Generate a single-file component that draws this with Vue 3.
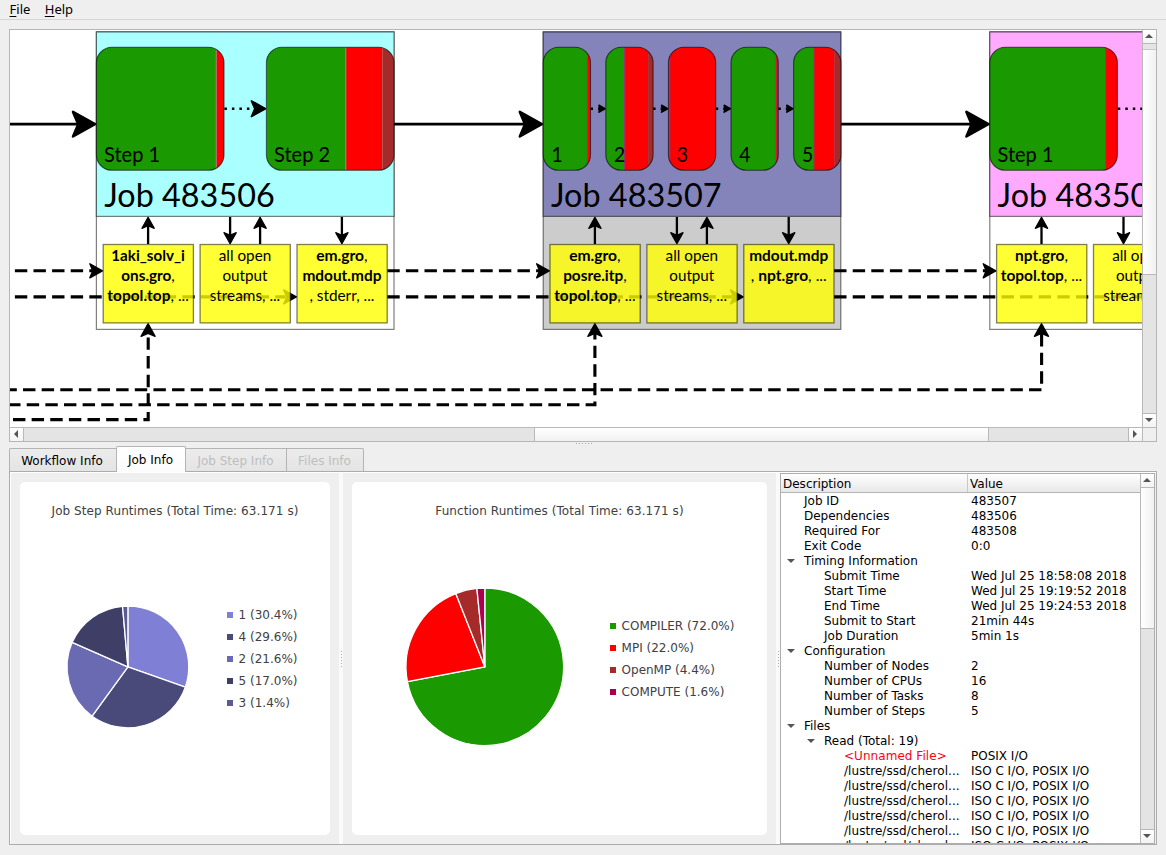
<script setup>
const GREEN = '#1a9900'
const RED = '#ff0000'
const BROWN = '#a52a2a'

const wide = (x, label, parts) => ({ x, w: 127.6, label, tx: 7.7, tl: 56, parts })
const slim = (i, label, parts) => ({ x: i * 62.6, w: 47.3, label, tx: 8.3, tl: 11.2, parts })

const jobs = [
  {
    x: 96.4, id: 'Job 483506', head: '#aaffff', body: 'none', sep: '#a08080',
    steps: [
      wide(0, 'Step 1', [[0, 119.8, GREEN], [119.8, 8, RED]]),
      wide(170, 'Step 2', [[0, 249.4 - 170, GREEN], [79.4, 36.6, RED], [116, 12, BROWN]])
    ],
    files: [
      [[['b', '1aki_solv_i'], 73.5], [['b', 'ons.gro'], ['n', ','], 53.5], [['b', 'topol.top'], ['n', ', ...'], 81.5]],
      [[['n', 'all open'], 52.5], [['n', 'output'], 45], [['n', 'streams, ...'], 70.5]],
      [[['b', 'em.gro'], ['n', ','], 51.5], [['b', 'mdout.mdp'], 79], [['n', ', stderr, ...'], 65]]
    ]
  },
  {
    x: 543.2, id: 'Job 483507', head: '#8484bb', body: '#cccccc', sep: '#a03070',
    steps: [
      slim(0, '1', [[0, 44.2, GREEN], [44.2, 3.2, RED]]),
      slim(1, '2', [[0, 18.8, GREEN], [18.8, 23.6, RED], [42.4, 5, BROWN]]),
      slim(2, '3', [[0, 1.4, BROWN], [1.4, 46, RED]]),
      slim(3, '4', [[0, 45, GREEN], [45, 2.4, RED]]),
      slim(4, '5', [[0, 20.4, GREEN], [20.4, 20.6, RED], [41, 6.4, BROWN]])
    ],
    files: [
      [[['b', 'em.gro'], ['n', ','], 51.5], [['b', 'posre.itp'], ['n', ','], 63.5], [['b', 'topol.top'], ['n', ', ...'], 81.5]],
      [[['n', 'all open'], 52.5], [['n', 'output'], 45], [['n', 'streams, ...'], 70.5]],
      [[['b', 'mdout.mdp'], 79], [['n', ', '], ['b', 'npt.gro'], ['n', ', ...'], 76]]
    ]
  },
  {
    x: 989.8, id: 'Job 483508', head: '#ffaaff', body: 'none', sep: '#c02060',
    steps: [wide(0, 'Step 1', [[0, 115.8, GREEN], [115.8, 12, RED]])],
    files: [
      [[['b', 'npt.gro'], ['n', ','], 53], [['b', 'topol.top'], ['n', ', ...'], 81.5]],
      [[['n', 'all open'], 52.5], [['n', 'output'], 45], [['n', 'streams, ...'], 70.5]]
    ]
  }
]

const runs = line => line.slice(0, -1)
const len = line => line[line.length - 1]
const headAt = (x, y, s = 1, deg = 0) => `translate(${x} ${y}) rotate(${deg}) scale(${s})`
const linkStarts = [-59.5, 387.3, 834.1]

function slices(values, colors, r) {
  let a = 0
  return values.map((v, i) => {
    const p = t => `${(r + r * Math.sin(t)).toFixed(2)} ${(r - r * Math.cos(t)).toFixed(2)}`
    const b = a + (v / 100) * Math.PI * 2
    const d = `M${r} ${r}L${p(a)}A${r} ${r} 0 ${v > 50 ? 1 : 0} 1 ${p(b)}Z`
    a = b
    return { d, color: colors[i] }
  })
}

const charts = [
  {
    cls: 'steps', title: 'Job Step Runtimes (Total Time: 63.171 s)', r: 60.9,
    labels: ['1 (30.4%)', '4 (29.6%)', '2 (21.6%)', '5 (17.0%)', '3 (1.4%)'],
    values: [30.4, 29.6, 21.6, 17, 1.4],
    colors: ['#7f7fd5', '#4a4a7a', '#6a6ab2', '#3e3e66', '#5a5a94']
  },
  {
    cls: 'functions', title: 'Function Runtimes (Total Time: 63.171 s)', r: 78.8,
    labels: ['COMPILER (72.0%)', 'MPI (22.0%)', 'OpenMP (4.4%)', 'COMPUTE (1.6%)'],
    values: [72, 22, 4.4, 1.6],
    colors: [GREEN, RED, BROWN, '#aa0050']
  }
]

const lustre = ['/lustre/ssd/cherol...', 'ISO C I/O, POSIX I/O', 2]
const rows = [
  ['Job ID', '483507', 0],
  ['Dependencies', '483506', 0],
  ['Required For', '483508', 0],
  ['Exit Code', '0:0', 0],
  ['Timing Information', '', 0, true],
  ['Submit Time', 'Wed Jul 25 18:58:08 2018', 1],
  ['Start Time', 'Wed Jul 25 19:19:52 2018', 1],
  ['End Time', 'Wed Jul 25 19:24:53 2018', 1],
  ['Submit to Start', '21min 44s', 1],
  ['Job Duration', '5min 1s', 1],
  ['Configuration', '', 0, true],
  ['Number of Nodes', '2', 1],
  ['Number of CPUs', '16', 1],
  ['Number of Tasks', '8', 1],
  ['Number of Steps', '5', 1],
  ['Files', '', 0, true],
  ['Read (Total: 19)', '', 1, true],
  ['<Unnamed File>', 'POSIX I/O', 2, false, true],
  lustre, lustre, lustre, lustre, lustre, lustre
]
</script>

<template>
  <div class="window">
    <nav class="menu">
      <span><u>F</u>ile</span>
      <span><u>H</u>elp</span>
    </nav>

    <section class="graph">
      <svg class="canvas" viewBox="10 30 1132 397" width="1132" height="397">
        <defs>
          <path id="head" d="M-1.4 0L-23.4 -12.3L-18.2 0L-23.4 12.3Z" />
          <path id="head-small" d="M-0.8 0L-6.8 -3.4L-6 0L-6.8 3.4Z" />
          <clipPath v-for="(s, i) in [47.3, 127.6]" :id="'clip' + i" :key="s">
            <rect x="0" y="47.3" :width="s" height="123" rx="15.5" />
          </clipPath>
        </defs>

        <g v-for="j in jobs" :key="j.id" :transform="`translate(${j.x} 0)`">
          <rect class="edge" x="0" y="31.8" width="297.6" height="297.6" :fill="j.body" />
          <rect class="edge" x="0" y="32" width="297.6" height="184.4" :fill="j.head" />
        </g>

        <g class="flow">
          <path d="M10 124.2H80M394 124.2H526M841 124.2H973" />
          <use v-for="j in jobs" :key="j.id" href="#head" :transform="headAt(j.x, 124.2)" class="arrow" />
        </g>

        <g class="dash">
          <g v-for="(x, i) in linkStarts" :key="x">
            <path :d="`M${x} 270.8H${x + 152}`" />
            <path :d="`M${x} 296.9H${x + 345}`" />
            <use href="#head" :transform="headAt(jobs[i].x + 6.8, 270.8, 0.57)" class="arrow" />
            <use href="#head" :transform="headAt(jobs[i].x + 200.7, 296.9, 0.57)" class="arrow" />
          </g>
          <path class="route" d="M4.4 389.8H1041.6V325" />
          <path class="route" d="M8.1 404.7H594.9V325" />
          <path class="route" d="M13 419.6H148.2V325" />
          <use v-for="j in jobs" :key="j.id" href="#head" :transform="headAt(j.x + 51.7, 323, 0.57, -90)" class="arrow" />
        </g>

        <g v-for="j in jobs" :key="j.id" :transform="`translate(${j.x} 0)`">
          <g v-for="(s, i) in j.steps" :key="s.label" :transform="`translate(${s.x} 0)`">
            <g :clip-path="s.w < 100 ? 'url(#clip0)' : 'url(#clip1)'">
              <rect v-for="p in s.parts" :key="p[0]" :x="p[0]" y="47" :width="p[1]" height="124" :fill="p[2]" />
              <rect v-for="p in s.parts.slice(1, 2)" :key="'s' + p[0]" :x="p[0] - 0.5" y="47" width="1" height="124" :fill="j.sep" />
            </g>
            <rect class="step-edge" x="0" y="47.3" :width="s.w" height="123" rx="15.5" />
            <text :x="s.tx" y="162" class="step-name" :textLength="s.tl" lengthAdjust="spacingAndGlyphs">{{ s.label }}</text>
            <template v-if="s.w > 100 && i === 0">
              <path class="dots" d="M128 108.7H160" />
              <use href="#head" :transform="headAt(170, 108.7, 0.64)" class="arrow" />
            </template>
            <template v-if="s.w < 100 && i < 4">
              <path class="dots" d="M47.3 108.7H56" />
              <use href="#head-small" :transform="headAt(62.6, 108.7)" class="arrow small" />
            </template>
          </g>
          <text x="7.8" y="206.8" class="job-name" textLength="170.5" lengthAdjust="spacingAndGlyphs">{{ j.id }}</text>

          <path class="io" d="M51.7 244V224M133.7 217V237M163.7 244V224M245.5 217V237" />
          <use href="#head" :transform="headAt(51.7, 216.6, 0.5, -90)" class="arrow" />
          <use href="#head" :transform="headAt(133.7, 244.4, 0.5, 90)" class="arrow" />
          <use href="#head" :transform="headAt(163.7, 216.6, 0.5, -90)" class="arrow" />
          <use href="#head" :transform="headAt(245.5, 244.4, 0.5, 90)" class="arrow" />

          <g v-for="(f, i) in j.files" :key="i" :transform="`translate(${6.8 + i * 96.9} 0)`">
            <rect class="file" x="0" y="244.5" width="90.2" height="78.4" />
            <text
              v-for="(line, n) in f" :key="n" class="file-name" x="44.9" :y="260.8 + n * 20"
              :textLength="len(line)" lengthAdjust="spacingAndGlyphs"
            ><tspan v-for="(r, k) in runs(line)" :key="k" :class="r[0]">{{ r[1] }}</tspan></text>
          </g>
        </g>
      </svg>

      <div class="vbar">
        <i class="btn"><svg viewBox="0 0 8 4"><path d="M0 4L4 0L8 4Z" /></svg></i>
        <i class="groove g-top"></i>
        <i class="thumb t-graph"></i>
        <i class="groove g-rest"></i>
        <i class="btn"><svg viewBox="0 0 8 4"><path d="M0 0L4 4L8 0Z" /></svg></i>
      </div>
      <div class="hbar">
        <i class="btn"><svg class="side" viewBox="0 0 4 8"><path d="M4 0L0 4L4 8Z" /></svg></i>
        <i class="groove h-left"></i>
        <i class="thumb t-wide"></i>
        <i class="groove g-rest"></i>
        <i class="btn"><svg class="side" viewBox="0 0 4 8"><path d="M0 0L4 4L0 8Z" /></svg></i>
      </div>
      <div class="corner"></div>
    </section>

    <div class="split-h"><b v-for="n in 6" :key="n"></b></div>

    <div class="tabs">
      <span class="tab t1">Workflow Info</span>
      <span class="tab t2 active">Job Info</span>
      <span class="tab t3 off">Job Step Info</span>
      <span class="tab t4 off">Files Info</span>
    </div>

    <section class="pane">
      <template v-for="c in charts" :key="c.cls">
        <div class="chart-wrap" :class="c.cls">
          <div class="card">
            <h3>{{ c.title }}</h3>
            <div class="chart">
              <svg class="pie" :width="c.r * 2" :height="c.r * 2" :viewBox="`0 0 ${c.r * 2} ${c.r * 2}`">
                <path v-for="s in slices(c.values, c.colors, c.r)" :key="s.color" :d="s.d" :fill="s.color" />
              </svg>
              <ul>
                <li v-for="(l, i) in c.labels" :key="l">
                  <svg width="6" height="6"><rect width="6" height="6" :fill="c.colors[i]" /></svg>{{ l }}
                </li>
              </ul>
            </div>
          </div>
        </div>
        <div class="split-v"><b v-for="n in 6" :key="n"></b></div>
      </template>

      <div class="tree">
        <div class="table">
          <div class="thead"><span>Description</span><span>Value</span></div>
          <div v-for="(r, i) in rows" :key="i" class="row" :class="['lvl' + r[2], { unnamed: r[4] }]">
            <span class="key">
              <svg v-if="r[3]" width="8" height="4" viewBox="0 0 8 4"><path d="M0 0L4 4L8 0Z" /></svg>{{ r[0] }}
            </span>
            <span class="val">{{ r[1] }}</span>
          </div>
        </div>
        <div class="vbar">
          <i class="btn"><svg viewBox="0 0 8 4"><path d="M0 4L4 0L8 4Z" /></svg></i>
          <i class="thumb t-tree"></i>
          <i class="groove g-rest"></i>
          <i class="btn"><svg viewBox="0 0 8 4"><path d="M0 0L4 4L8 0Z" /></svg></i>
        </div>
      </div>
    </section>
  </div>
</template>

<style>
html, body { margin: 0; background: #efefef; overflow: hidden; }
</style>

<style scoped>
.window {
  width: 1166px; height: 855px; box-sizing: border-box; background: #efefef; color: #000;
  font: 12px/15px "DejaVu Sans", sans-serif; display: flex; flex-direction: column; overflow: hidden;
}
.menu {
  height: 19px; flex: none; border-bottom: 1px solid #d6d6d6; display: flex; gap: 14.4px; padding-left: 9.6px;
  font: 13px/19px "Noto Sans", sans-serif;
}
.menu u { text-underline-offset: 2px; }

.graph {
  margin: 9px 0 0 9px; width: 1146px; height: 411px; flex: none; border: 1px solid #b6b6b6; background: #fff;
  display: grid; grid-template: 397px 14px / 1132px 14px;
}
.canvas { display: block; overflow: hidden; }
.edge { stroke: rgba(0, 0, 0, 0.5); stroke-width: 1.2; }
.flow path { stroke: #000; stroke-width: 2.8; fill: none; }
.arrow { fill: #000; stroke: #000; stroke-width: 2.5; stroke-linejoin: round; stroke-dasharray: none; }
.dash path { stroke: #000; stroke-width: 3.1; stroke-dasharray: 12.4 6.2; fill: none; }
.dash .route { stroke-dasharray: 12.42 6.21; }
#head { stroke-dasharray: none; fill: #000; stroke: #000; stroke-width: 2.5; }
#head-small { fill: #000; stroke: #000; stroke-width: 1.6; }
.step-edge { fill: none; stroke: rgba(0, 0, 0, 0.6); stroke-width: 1.1; }
.dots { stroke: #000; stroke-width: 2.5; stroke-dasharray: 2.5 5; fill: none; }
.io { stroke: #000; stroke-width: 2.3; fill: none; }
.file { fill: rgba(255, 255, 0, 0.8); stroke: rgba(0, 0, 0, 0.5); stroke-width: 1.3; }
.step-name { font: 20.5px Lato, sans-serif; }
.job-name { font: 33px Lato, sans-serif; }
.file-name { font: 15px Lato, sans-serif; text-anchor: middle; white-space: pre; }
.b { font-weight: 700; }

.vbar { border-left: 1px solid #b9b9b9; display: flex; flex-direction: column; width: 13px; }
.hbar { border-top: 1px solid #b9b9b9; display: flex; height: 13px; }
.corner { border: 1px solid #b9b9b9; border-width: 1px 0 0 1px; background: #efefef; }
.btn { flex: none; width: 13px; height: 13px; display: flex; align-items: center; justify-content: center; background: linear-gradient(#fff, #f3f3f3); }
.btn svg { width: 8px; height: 4px; margin: 0 1px 1px 0; fill: #555; }
.btn svg.side { width: 4px; height: 8px; }
.groove { background: #e4e4e4; box-sizing: border-box; }
.thumb { box-sizing: border-box; flex: none; background: linear-gradient(90deg, #fff, #f1f1f1); border: 1px solid #b9b9b9; border-width: 1px 0; }
.g-rest { flex: 1; }
.vbar .btn:first-child { border-bottom: 1px solid #b9b9b9; }
.vbar .btn:last-child { border-top: 1px solid #b9b9b9; }
.hbar .btn:first-child { border-right: 1px solid #b9b9b9; }
.hbar .btn:last-child { border-left: 1px solid #b9b9b9; }
.g-top { height: 5px; flex: none; }
.t-graph { height: 226px; border-top-color: #c8c8c8; }
.h-left { width: 510px; flex: none; }
.t-wide { width: 455px; border-width: 0 1px; background: linear-gradient(#fff, #f1f1f1); }
.t-tree { height: 141px; border-top: 0; }

.split-h { height: 4px; flex: none; display: flex; gap: 2px; padding: 1px 0 0 576px; box-sizing: border-box; }
.split-h b, .split-v b { width: 1px; height: 1px; background: #aaa; }

.tabs { height: 25px; flex: none; display: flex; align-items: flex-end; padding-left: 9px; position: relative; z-index: 1; }
.tab {
  box-sizing: border-box; height: 23px; border: 1px solid #b4b4b4; border-bottom: 0; border-left: 0; border-radius: 0 2px 0 0;
  background: linear-gradient(#ececec, #e4e4e4); text-align: center; line-height: 24px; white-space: nowrap; padding-right: 1px;
}
.t1 { width: 107px; border-left: 1px solid #b4b4b4; border-radius: 2px 0 0 0; border-right: 0; padding-right: 2px; }
.t2 { width: 70px; }
.t3 { width: 101px; border-radius: 0; }
.t4 { width: 77px; }
.active { height: 26px; margin-bottom: -1px; background: linear-gradient(#fff, #fcfcfc); border-left: 1px solid #b4b4b4; border-radius: 2px 2px 0 0; line-height: 26px; }
.off { color: #bebebe; }

.pane {
  margin-left: 9px; width: 1145px; height: 371px; flex: none; border: 1px solid #acacac; display: flex;
  background: #efefef; padding: 1px 0 0 1px; box-sizing: content-box; box-shadow: inset 1px 1px #fff;
}
.chart-wrap { box-sizing: border-box; padding: 9px 9px 8px; flex: none; }
.steps { width: 328px; }
.functions { width: 433px; }
.card { background: #fff; border-radius: 5px; height: 353px; box-sizing: border-box; padding-top: 19px; color: #404044; }
.steps .card { width: 310px; }
.functions .card { width: 415px; }
h3 { margin: 0; font: inherit; line-height: 20px; text-align: center; letter-spacing: 0.07px; }
.chart { display: flex; height: 292px; align-items: center; }
.pie { flex: none; overflow: visible; stroke: #fff; stroke-width: 1.3; stroke-linejoin: round; }
.steps .pie { margin: 0 38.7px 0 46.5px; }
.functions .pie { margin: 0 46.2px 0 54.2px; }
ul { list-style: none; margin: 0; padding: 0 0 16px; }
li { height: 22px; line-height: 22px; display: flex; align-items: center; gap: 5.6px; white-space: nowrap; }
.split-v { flex: none; width: 4px; background: #fafafa; display: flex; flex-direction: column; align-items: center; justify-content: center; gap: 2px; }

.tree { flex: none; box-sizing: border-box; width: 375px; height: 371px; border: 1px solid #aeaeae; background: #fff; display: flex; }
.table { flex: none; width: 359px; overflow: hidden; }
.thead { height: 18px; border-bottom: 1px solid #b4b4b4; background: linear-gradient(#fff, #e8e8e8); display: flex; line-height: 20px; }
.thead span { box-sizing: border-box; width: 187px; padding-left: 2px; border-right: 1px solid #c8c8c8; }
.thead span:last-child { border: 0; width: 170px; }
.row { height: 15px; line-height: 17px; display: flex; white-space: pre; }
.key { position: relative; box-sizing: border-box; width: 187px; padding-left: 23px; flex: none; white-space: nowrap; }
.lvl1 .key { padding-left: 43px; }
.lvl2 .key { padding-left: 63px; letter-spacing: 0.05px; }
.key svg { position: absolute; left: 6px; top: 6px; fill: #555; }
.lvl1 .key svg { left: 26px; }
.val { padding-left: 3px; }
.unnamed .key { color: #ff0014; }
</style>
